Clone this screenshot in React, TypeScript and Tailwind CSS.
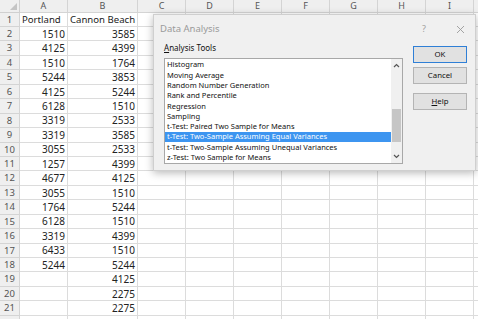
import React from "react";

const data: [string, string][] = [
  ["Portland", "Cannon Beach"],
  ["1510", "3585"],
  ["4125", "4399"],
  ["1510", "1764"],
  ["5244", "3853"],
  ["4125", "5244"],
  ["6128", "1510"],
  ["3319", "2533"],
  ["3319", "3585"],
  ["3055", "2533"],
  ["1257", "4399"],
  ["4677", "4125"],
  ["3055", "1510"],
  ["1764", "5244"],
  ["6128", "1510"],
  ["3319", "4399"],
  ["6433", "1510"],
  ["5244", "5244"],
  ["", "4125"],
  ["", "2275"],
  ["", "2275"],
  ["", ""],
];

const cols = ["A", "B", "C", "D", "E", "F", "G", "H", "I"];

const tools = [
  "Histogram",
  "Moving Average",
  "Random Number Generation",
  "Rank and Percentile",
  "Regression",
  "Sampling",
  "t-Test: Paired Two Sample for Means",
  "t-Test: Two-Sample Assuming Equal Variances",
  "t-Test: Two-Sample Assuming Unequal Variances",
  "z-Test: Two Sample for Means",
];

export default function App() {
  return (
    <div
      className="relative w-[478px] h-[319px] overflow-hidden bg-white text-[#222]"
      style={{ fontFamily: '"Noto Sans", "Open Sans", sans-serif' }}
    >
      <div className="grid grid-cols-[20px_48px_70px_repeat(7,48px)_4px] grid-rows-[12.6px_repeat(22,14.45px)]">
        {/* header row */}
        <div className="relative bg-[#efefef] border-r border-b border-[#d0d0d0]">
          <svg className="absolute right-[2px] bottom-[2px]" width="7" height="7" viewBox="0 0 7 7">
            <polygon points="7,0 7,7 0,7" fill="#c4c4c4" />
          </svg>
        </div>
        {cols.map((c) => (
          <div
            key={c}
            className="flex items-center justify-center bg-[#efefef] border-r border-b border-[#d4d4d4] text-[9px] text-[#555] leading-none"
          >
            {c}
          </div>
        ))}
        <div className="bg-[#efefef] border-b border-[#d4d4d4]" />
        {data.map((row, i) => (
          <React.Fragment key={i}>
            <div className="flex items-center justify-center bg-[#efefef] border-r border-b border-[#d4d4d4] text-[9.5px] text-[#555] leading-none">
              {i < 21 ? i + 1 : ""}
            </div>
            <div
              className={`flex items-center border-r border-b border-[#dcdcdc] leading-none ${
                i === 0 ? "justify-start pl-[2px] text-[9.6px]" : "justify-end pr-[2px] text-[10px]"
              }`}
            >
              {row[0]}
            </div>
            <div
              className={`flex items-center border-r border-b border-[#dcdcdc] leading-none whitespace-nowrap ${
                i === 0 ? "justify-start pl-[2px] text-[9.6px]" : "justify-end pr-[2px] text-[10px]"
              }`}
            >
              {row[1]}
            </div>
            {Array.from({ length: 7 }).map((_, j) => (
              <div key={j} className="border-r border-b border-[#dcdcdc]" />
            ))}
            <div className="border-b border-[#dcdcdc]" />
          </React.Fragment>
        ))}
      </div>

      {/* Dialog */}
      <div className="absolute left-[153px] top-[14px] w-[323px] h-[157px] bg-[#f0f0f0] border border-[#cfcfcf] shadow-[0_2px_8px_rgba(0,0,0,0.28)]">
        <div className="absolute left-[6px] top-[9px] text-[9.5px] text-[#9a9a9a] leading-none">Data Analysis</div>
        <div className="absolute left-[268px] top-[9px] text-[9px] text-[#a0a0a0] leading-none">?</div>
        <svg className="absolute left-[302px] top-[10px]" width="9" height="9" viewBox="0 0 9 9">
          <path d="M1 1 L8 8 M8 1 L1 8" stroke="#9a9a9a" strokeWidth="0.9" />
        </svg>

        <div className="absolute left-[10px] top-[29px] text-[8px] leading-none text-[#111]">
          <span className="underline">A</span>nalysis Tools
        </div>

        <div className="absolute left-[10px] top-[43px] w-[239px] h-[106px] bg-white border border-[#a8a8a8] flex">
          <div className="flex-1 pt-[1px] flex flex-col">
            {tools.map((t, i) => (
              <div
                key={t}
                className={`h-[10.45px] flex items-center pl-[2px] text-[7.5px] leading-none whitespace-nowrap ${
                  i === 7 ? "bg-[#3d95f0] text-white" : "text-[#111]"
                }`}
              >
                {t}
              </div>
            ))}
          </div>
          <div className="w-[11px] bg-[#f0f0f0] relative">
            <svg className="absolute left-[2px] top-[4px]" width="7" height="5" viewBox="0 0 7 5">
              <path d="M1 4 L3.5 1.5 L6 4" stroke="#555" strokeWidth="1.2" fill="none" />
            </svg>
            <div className="absolute left-[1px] right-[1px] top-[50px] h-[33px] bg-[#c6c6c6]" />
            <svg className="absolute left-[2px] bottom-[4px]" width="7" height="5" viewBox="0 0 7 5">
              <path d="M1 1 L3.5 3.5 L6 1" stroke="#555" strokeWidth="1.2" fill="none" />
            </svg>
          </div>
        </div>

        <div className="absolute left-[259px] top-[31px] w-[54px] flex flex-col">
          <div className="h-[17px] flex items-center justify-center bg-[#e1e1e1] border border-[#2f7fd6] text-[7.8px] text-[#111] leading-none">
            OK
          </div>
          <div className="mt-[4px] h-[17px] flex items-center justify-center bg-[#e1e1e1] border border-[#b4b4b4] text-[7.8px] text-[#111] leading-none">
            Cancel
          </div>
          <div className="mt-[9px] h-[17px] flex items-center justify-center bg-[#e1e1e1] border border-[#b4b4b4] text-[7.8px] text-[#111] leading-none">
            <span className="underline">H</span>elp
          </div>
        </div>
      </div>
    </div>
  );
}
